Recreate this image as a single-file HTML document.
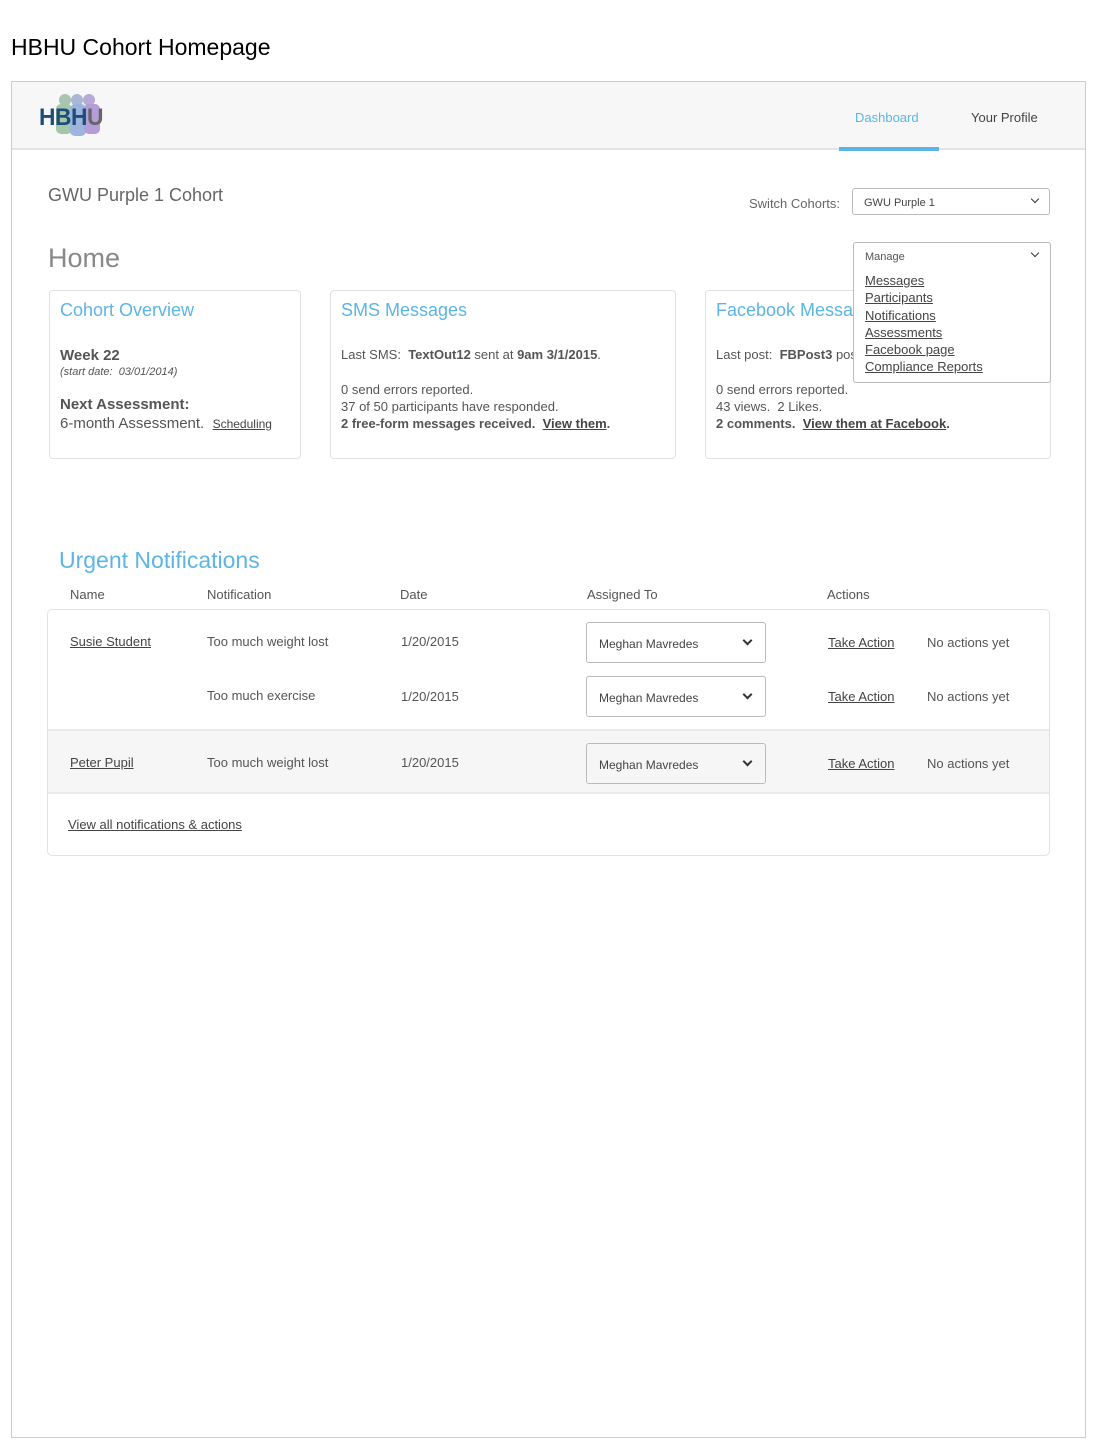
<!DOCTYPE html>
<html><head><meta charset="utf-8"><style>
*{box-sizing:border-box;margin:0;padding:0}
body{width:1100px;height:1450px;background:#fff;font-family:"Liberation Sans",sans-serif;color:#555;position:relative;overflow:hidden}
.a{position:absolute;white-space:nowrap}
.t{font-size:13px}
.blue{color:#5cb5e6}
u,.u{text-decoration:underline;color:#444}
.box{position:absolute;border:1px solid #e2e2e2;border-radius:4px;background:#fff}
.sel{position:absolute;border:1px solid #bbb;border-radius:3px;background:#fff;font-size:12px;color:#444}
.chev{position:absolute;width:7px;height:7px;border-right:2px solid #333;border-bottom:2px solid #333;transform:rotate(45deg)}
</style></head><body>
<div class="a" style="left:11px;top:34px;font-size:23px;color:#000">HBHU Cohort Homepage</div>
<div style="position:absolute;left:11px;top:81px;width:1075px;height:1357px;border:1px solid #ccc"></div>
<div style="position:absolute;left:12px;top:82px;width:1073px;height:68px;background:#f7f7f7;border-bottom:2px solid #e4e4e4"></div>
<!-- logo -->
<div class="a" style="left:56px;top:94px;width:48px;height:42px">
 <div style="position:absolute;left:3px;top:0;width:12px;height:12px;border-radius:50%;background:#a9c4b0"></div>
 <div style="position:absolute;left:15px;top:0;width:12px;height:12px;border-radius:50%;background:#aab7d6"></div>
 <div style="position:absolute;left:27px;top:0;width:12px;height:12px;border-radius:50%;background:#b9a9d6"></div>
 <div style="position:absolute;left:0;top:10px;width:16px;height:30px;border-radius:5px;background:#a6c6a9"></div>
 <div style="position:absolute;left:14px;top:10px;width:16px;height:32px;border-radius:5px;background:#9db4dd"></div>
 <div style="position:absolute;left:28px;top:10px;width:16px;height:30px;border-radius:5px;background:#b49ed9"></div>
</div>
<div class="a" style="left:39px;top:104px;font-size:24px;font-weight:bold;color:#1d4d78;letter-spacing:-0.5px;transform:scaleX(0.95);transform-origin:left">HBH<span style="color:#666">U</span></div>
<div class="a t blue" style="left:855px;top:110px">Dashboard</div>
<div style="position:absolute;left:839px;top:147px;width:100px;height:4px;background:#5cb5e6"></div>
<div class="a t" style="left:971px;top:110px;color:#444">Your Profile</div>

<div class="a" style="left:48px;top:185px;font-size:18px;color:#666">GWU Purple 1 Cohort</div>
<div class="a t" style="left:749px;top:196px;color:#666">Switch Cohorts:</div>
<div class="sel" style="left:852px;top:188px;width:198px;height:27px;font-size:11px"><span class="a" style="left:11px;top:8px">GWU Purple 1</span><div class="chev" style="left:179px;top:7px;width:6px;height:6px;border-width:1.5px"></div></div>
<div class="a" style="left:48px;top:243px;font-size:27px;color:#888">Home</div>

<div class="box" style="left:49px;top:290px;width:252px;height:169px">
 <div class="a blue" style="left:10px;top:9px;font-size:18px">Cohort Overview</div>
 <div class="a" style="left:10px;top:56px;font-size:15px;font-weight:bold;color:#555">Week 22</div>
 <div class="a" style="left:10px;top:75px;font-size:11px;font-style:italic">(start date:&nbsp; 03/01/2014)</div>
 <div class="a" style="left:10px;top:105px;font-size:15px;font-weight:bold;color:#555">Next Assessment:</div>
 <div class="a" style="left:10px;top:124px;font-size:15px">6-month Assessment.&nbsp; <u style="font-size:12px">Scheduling</u></div>
</div>
<div class="box" style="left:330px;top:290px;width:346px;height:169px">
 <div class="a blue" style="left:10px;top:9px;font-size:18px">SMS Messages</div>
 <div class="a t" style="left:10px;top:56px">Last SMS:&nbsp; <b>TextOut12</b> sent at <b>9am 3/1/2015</b>.</div>
 <div class="a t" style="left:10px;top:90px;line-height:17px">0 send errors reported.<br>37 of 50 participants have responded.<br><b>2 free-form messages received.&nbsp; <u>View them</u>.</b></div>
</div>
<div class="box" style="left:705px;top:290px;width:346px;height:169px">
 <div class="a blue" style="left:10px;top:9px;font-size:18px">Facebook Messages</div>
 <div class="a t" style="left:10px;top:56px">Last post:&nbsp; <b>FBPost3</b> posted</div>
 <div class="a t" style="left:10px;top:90px;line-height:17px">0 send errors reported.<br>43 views.&nbsp; 2 Likes.<br><b>2 comments.&nbsp; <u>View them at Facebook</u>.</b></div>
</div>
<div class="box" style="left:853px;top:242px;width:198px;height:141px;border-color:#bbb;border-radius:3px">
 <div class="a" style="left:11px;top:8px;font-size:11px">Manage</div>
 <div class="chev" style="left:178px;top:7px;width:6px;height:6px;border-width:1.5px"></div>
 <div class="a t" style="left:11px;top:29px;line-height:17.3px"><u>Messages</u><br><u>Participants</u><br><u>Notifications</u><br><u>Assessments</u><br><u>Facebook page</u><br><u>Compliance Reports</u></div>
</div>

<div class="a blue" style="left:59px;top:547px;font-size:23px">Urgent Notifications</div>
<div class="a t" style="left:70px;top:587px">Name</div>
<div class="a t" style="left:207px;top:587px">Notification</div>
<div class="a t" style="left:400px;top:587px">Date</div>
<div class="a t" style="left:587px;top:587px">Assigned To</div>
<div class="a t" style="left:827px;top:587px">Actions</div>

<div class="box" style="left:47px;top:609px;width:1003px;height:247px;border-radius:5px;overflow:hidden">
 <div style="position:absolute;left:0;top:119px;width:100%;height:65px;background:#f6f6f6;border-top:2px solid #eaeaea;border-bottom:2px solid #eaeaea"></div>
</div>
<div class="a t" style="left:70px;top:634px"><u>Susie Student</u></div>
<div class="a t" style="left:207px;top:634px">Too much weight lost</div>
<div class="a t" style="left:401px;top:634px">1/20/2015</div>
<div class="a t" style="left:207px;top:688px">Too much exercise</div>
<div class="a t" style="left:401px;top:689px">1/20/2015</div>
<div class="a t" style="left:70px;top:755px"><u>Peter Pupil</u></div>
<div class="a t" style="left:207px;top:755px">Too much weight lost</div>
<div class="a t" style="left:401px;top:755px">1/20/2015</div>

<div class="sel" style="left:586px;top:622px;width:180px;height:41px"><span class="a" style="left:12px;top:14px">Meghan Mavredes</span><div class="chev" style="left:157px;top:14px"></div></div>
<div class="sel" style="left:586px;top:676px;width:180px;height:41px"><span class="a" style="left:12px;top:14px">Meghan Mavredes</span><div class="chev" style="left:157px;top:14px"></div></div>
<div class="sel" style="left:586px;top:743px;width:180px;height:41px;background:#f6f6f6"><span class="a" style="left:12px;top:14px">Meghan Mavredes</span><div class="chev" style="left:157px;top:14px"></div></div>
<div class="a t" style="left:828px;top:635px"><u>Take Action</u></div>
<div class="a t" style="left:927px;top:635px">No actions yet</div>
<div class="a t" style="left:828px;top:689px"><u>Take Action</u></div>
<div class="a t" style="left:927px;top:689px">No actions yet</div>
<div class="a t" style="left:828px;top:756px"><u>Take Action</u></div>
<div class="a t" style="left:927px;top:756px">No actions yet</div>
<div class="a t" style="left:68px;top:817px"><u>View all notifications &amp; actions</u></div>
</body></html>
